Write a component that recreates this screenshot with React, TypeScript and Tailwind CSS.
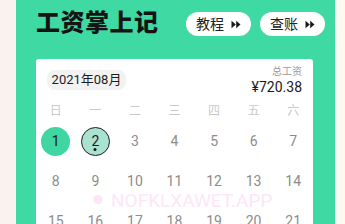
import React from "react";

const weekdays = ["日", "一", "二", "三", "四", "五", "六"];
const days = Array.from({ length: 21 }, (_, i) => i + 1);

function FastForward() {
  return (
    <svg width="10" height="9" viewBox="0 0 10 9" aria-hidden>
      <path d="M0.5 0.8 L4.8 4.5 L0.5 8.2 Z" fill="#1a1a1a" />
      <path d="M5.2 0.8 L9.5 4.5 L5.2 8.2 Z" fill="#1a1a1a" />
    </svg>
  );
}

function PillButton({ label }: { label: string }) {
  return (
    <button
      type="button"
      className="flex h-[24px] w-[65px] items-center justify-center gap-[7px] rounded-full bg-white text-[14px] leading-none text-[#222]"
    >
      {label}
      <FastForward />
    </button>
  );
}

function Day({ n }: { n: number }) {
  if (n === 1) {
    return (
      <div className="grid h-[29px] w-[29px] place-items-center rounded-full bg-[#3fd6a1] text-[14px] text-[#1c1c1c]">
        1
      </div>
    );
  }
  if (n === 2) {
    return (
      <div className="relative grid h-[29px] w-[29px] place-items-center rounded-full border border-[#1f1f1f] bg-[#a9e2d1] text-[14px] text-[#1c1c1c]">
        2
        <span className="absolute bottom-[4px] left-1/2 h-[3px] w-[3px] -translate-x-1/2 rounded-full bg-[#111]" />
      </div>
    );
  }
  return <span className="text-[14px] text-[#8c8c8c]">{n}</span>;
}

export default function App() {
  return (
    <div
      className="relative flex h-[224px] w-[345px] overflow-hidden"
      style={{ fontFamily: "Roboto, 'Noto Sans CJK SC', sans-serif" }}
    >
      <div className="w-[16px] shrink-0 bg-[#faf2ee]" />
      <div className="flex w-[319px] shrink-0 flex-col bg-[#3fd9a4] pl-[20px] pr-[22px]">
        <div className="flex h-[59px] shrink-0 items-start justify-between">
          <h1 className="mt-[8px] text-[24px] font-black leading-[30px] tracking-[0.5px] text-[#141414]">
            工资掌上记
          </h1>
          <div className="mr-[-12px] mt-[12px] flex gap-[9px]">
            <PillButton label="教程" />
            <PillButton label="查账" />
          </div>
        </div>
        <div className="shrink-0 rounded-t-[3px] bg-white">
          <div className="flex h-[41px] items-start justify-between px-[11px]">
            <div className="mt-[11px] flex h-[20px] w-[79px] items-center justify-center rounded-[8px] bg-[#f2f2f2] text-[13px] text-[#1e1e1e]">
              2021年08月
            </div>
            <div className="mt-[6px] flex flex-col items-end">
              <span className="text-[10px] leading-[13px] text-[#9a9a9a]">总工资</span>
              <span className="text-[14px] leading-[18px] text-[#1a1a1a]">¥720.38</span>
            </div>
          </div>
          <div className="grid h-[21px] grid-cols-7 items-center text-center text-[12px] text-[#c9c9c9]">
            {weekdays.map((w) => (
              <span key={w}>{w}</span>
            ))}
          </div>
          <div className="grid grid-cols-7 auto-rows-[40px]">
            {days.map((n) => (
              <div key={n} className="flex items-center justify-center">
                <Day n={n} />
              </div>
            ))}
          </div>
        </div>
      </div>
      <div className="flex-1 bg-[#fbfaf1]" />
      <div className="pointer-events-none absolute left-[93px] top-[191px] flex items-center gap-[8px] text-[19px] leading-none text-[#fde6f6]">
        <span className="text-[10px]">●</span>
        NOFKLXAWET.APP
      </div>
    </div>
  );
}
